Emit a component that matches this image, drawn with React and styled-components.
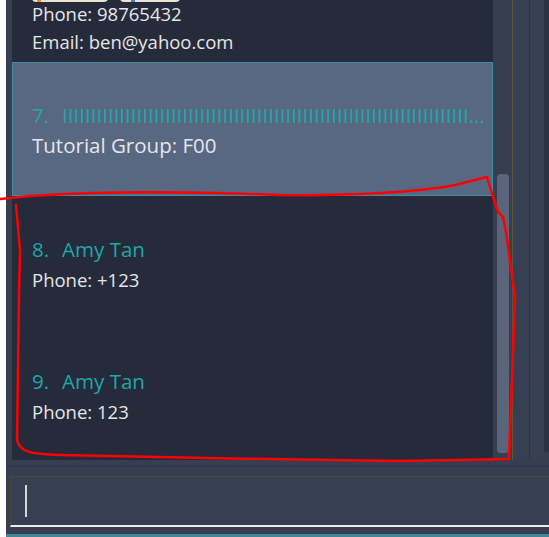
import React from "react";
import styled, { createGlobalStyle } from "styled-components";

const GlobalStyle = createGlobalStyle`
  html, body { margin: 0; padding: 0; background: #ffffff; }
  body { font-family: "Open Sans", "Noto Sans", sans-serif; }
  #root { width: 549px; height: 537px; }
`;

const Page = styled.div`
  position: relative;
  width: 549px;
  height: 537px;
  display: flex;
  background: #ffffff;
  overflow: hidden;
`;

const Edge = styled.div`
  width: 6px;
  flex: none;
  background: #ffffff;
`;

const Window = styled.div`
  flex: 1;
  display: flex;
  flex-direction: column;
  background: #363e50;
  min-width: 0;
`;

const Upper = styled.div`
  height: 460px;
  flex: none;
  display: flex;
  padding-left: 6px;
`;

const List = styled.div`
  width: 481px;
  flex: none;
  display: flex;
  flex-direction: column;
  background: #252b3b;
  overflow: hidden;
`;

const Cell = styled.div`
  box-sizing: border-box;
  height: ${(p) => p.$h}px;
  flex: none;
  display: flex;
  flex-direction: column;
  justify-content: ${(p) => (p.$partial ? "flex-end" : "center")};
  gap: ${(p) => (p.$partial ? "0" : "5px")};
  padding: ${(p) =>
    p.$partial ? "0 10px 8px 20px" : p.$selected ? "0 5px 0 19px" : "2px 10px 0 20px"};
  background: ${(p) => (p.$selected ? "#586883" : "#252b3b")};
  border: ${(p) => (p.$selected ? "1px solid #3f8ea3" : "none")};
  overflow: hidden;
`;

const TitleRow = styled.div`
  display: flex;
  align-items: baseline;
  font-size: 20.5px;
  line-height: 28px;
  color: #20a7a7;
  min-width: 0;
`;

const Index = styled.span`
  flex: none;
  margin-right: 13px;
`;

const Name = styled.span`
  flex: 1;
  min-width: 0;
  white-space: nowrap;
  overflow: hidden;
  text-overflow: ellipsis;
`;

const Details = styled.div`
  display: flex;
  flex-direction: column;
  gap: 4px;
`;

const Detail = styled.div`
  font-size: ${(p) => (p.$big ? "20.5px" : "18.5px")};
  line-height: ${(p) => (p.$big ? "23px" : "24px")};
  color: #e6e6e6;
  white-space: nowrap;
`;

const TagRow = styled.div`
  display: flex;
  gap: 12px;
  height: 22px;
  flex: none;
`;

const Tag = styled.div`
  width: ${(p) => p.$w}px;
  height: 22px;
  border-radius: 4px;
  background: #ece5cf;
  display: flex;
  align-items: flex-end;
  padding-left: ${(p) => p.$dot}px;
  box-sizing: border-box;
`;

const TagMark = styled.div`
  width: 4px;
  height: 8px;
  background: ${(p) => p.$c};
`;

const Track = styled.div`
  width: 19px;
  flex: none;
  box-sizing: border-box;
  padding: 174px 3px 0 4px;
  background: #363e50;
`;

const Thumb = styled.div`
  width: 12px;
  height: 279px;
  border-radius: 4px;
  background: #5a647a;
`;

const GoldLine = styled.div`
  width: 1px;
  flex: none;
  background: #5c5542;
`;

const SidePane = styled.div`
  width: ${(p) => p.$w}px;
  flex: none;
  background: #373f52;
  border-right: ${(p) => (p.$line ? "1px solid #2d3444" : "none")};
`;

const DarkPane = styled.div`
  flex: 1;
  height: 452px;
  background: #2b3242;
  border-bottom-left-radius: 3px;
`;

const Separator = styled.div`
  flex: none;
  height: 16px;
  box-sizing: border-box;
  padding-top: 6px;
`;

const SepLine = styled.div`
  height: 1px;
  background: #2f3647;
`;

const CommandBox = styled.div`
  flex: none;
  margin-left: 4px;
  height: 51px;
  box-sizing: border-box;
  border-top: 1px solid #4b4839;
  border-left: 1px solid #4b4839;
  border-bottom: 2px solid #ececec;
  background: #373f52;
  padding: 8px 0 0 14px;
`;

const Caret = styled.div`
  width: 2px;
  height: 32px;
  background: #d4d4d4;
`;

const Spacer = styled.div`
  flex: 1;
`;

const StatusBar = styled.div`
  flex: none;
  height: 3px;
  background: #3e8797;
`;

const Annotation = styled.svg`
  position: absolute;
  left: 0;
  top: 0;
  pointer-events: none;
`;

const longName = "I".repeat(120);

export default function App() {
  return (
    <>
      <GlobalStyle />
      <Page>
        <Edge />
        <Window>
          <Upper>
            <List>
              <Cell $h={62} $partial>
                <TagRow>
                  <Tag $w={76} $dot={5}>
                    <TagMark $c="#e8902a" />
                  </Tag>
                  <Tag $w={60} $dot={11}>
                    <TagMark $c="#2f86d6" />
                  </Tag>
                </TagRow>
                <Details>
                  <Detail>Phone: 98765432</Detail>
                  <Detail>Email: ben@yahoo.com</Detail>
                </Details>
              </Cell>
              <Cell $h={134} $selected>
                <TitleRow>
                  <Index>7.</Index>
                  <Name>{longName}</Name>
                </TitleRow>
                <Detail $big>Tutorial Group: F00</Detail>
              </Cell>
              <Cell $h={132}>
                <TitleRow>
                  <Index>8.</Index>
                  <Name>Amy Tan</Name>
                </TitleRow>
                <Detail>Phone: +123</Detail>
              </Cell>
              <Cell $h={132}>
                <TitleRow>
                  <Index>9.</Index>
                  <Name>Amy Tan</Name>
                </TitleRow>
                <Detail>Phone: 123</Detail>
              </Cell>
            </List>
            <Track>
              <Thumb />
            </Track>
            <GoldLine />
            <SidePane $w={16} $line />
            <SidePane $w={14} />
            <DarkPane />
          </Upper>
          <Separator>
            <SepLine />
          </Separator>
          <CommandBox>
            <Caret />
          </CommandBox>
          <Spacer />
          <StatusBar />
        </Window>
        <Annotation width="549" height="537" viewBox="0 0 549 537">
          <path
            d="M0,199 C60,192 150,190 280,195 C350,196 420,192 455,185 L487,177 L490,187 L493,197 L498,212 L503,217 L506,232 L515,297 L512,380 L509,459 L400,461 C300,460 150,457 60,455 C30,454 20,452 17,440 L19,297 L20,250 L16,205"
            fill="none"
            stroke="#ff0000"
            strokeWidth="2.5"
            strokeLinejoin="round"
            strokeLinecap="round"
          />
        </Annotation>
      </Page>
    </>
  );
}
